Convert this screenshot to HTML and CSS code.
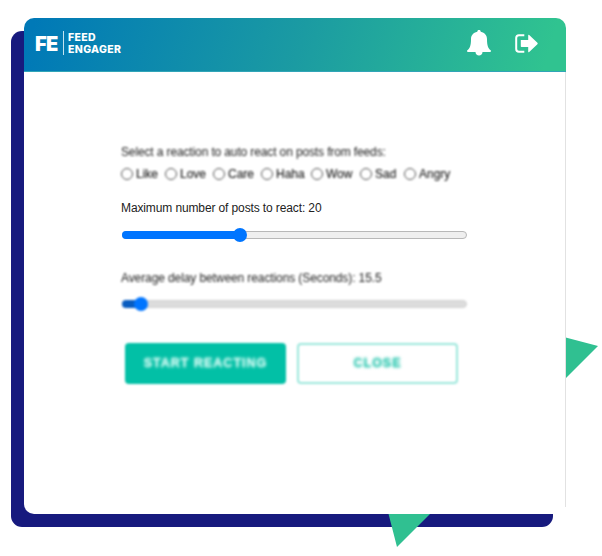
FILE: index.html
```html
<!DOCTYPE html>
<html lang="en">
<head>
<meta charset="utf-8">
<title>Feed Engager</title>
<link rel="stylesheet" href="styles.css">
</head>
<body>
<div class="stage">
  <div class="backdrop"></div>
  <svg class="shapes" width="602" height="556" viewBox="0 0 602 556" aria-hidden="true">
    <path d="M560 336 598 346 560 384zM387 508 436 508 397 547z"/>
  </svg>
  <main class="card">
    <header class="header">
      <div class="logo">
        <span class="mark">FE</span>
        <span class="name"><span>FEED</span><span>ENGAGER</span></span>
      </div>
      <nav class="actions">
        <svg width="24" height="26" viewBox="0 0 24 26" fill="#fff"><path d="M12 0c1.100 0 1.700.6 1.700 1.700C17.900 2.600 20 5.500 20 9c0 6.600 1 9 3.600 11.300.8.800.4 1.700-.7 1.700H1.100c-1.100 0-1.500-.9-.7-1.700C3 18 4 15.600 4 9c0-3.500 2.100-6.400 6.300-7.300C10.300.6 10.900 0 12 0zM8.500 22h7c0 2.200-1.500 3.500-3.500 3.500S8.500 24.200 8.500 22z"/></svg>
        <svg width="23" height="19" viewBox="0 0 23 19"><path d="M9.300 1.200H4Q1.200 1.200 1.200 4v11Q1.200 17.800 4 17.800h5.300" fill="none" stroke="#fff" stroke-width="2"/><path d="M5.800 6h7.400V1.500q0-1.300 1-.4l8.200 7.700q.6.700 0 1.400l-8.200 7.700q-1 .9-1-.4V13H6.500q-.7 0-.7-.7z" fill="#fff"/></svg>
      </nav>
    </header>
    <section class="content">
      <p class="label soft prompt">Select a reaction to auto react on posts from feeds:</p>
      <div class="reactions soft">
        <span class="option like"><i class="radio"></i>Like</span>
        <span class="option love"><i class="radio"></i>Love</span>
        <span class="option care"><i class="radio"></i>Care</span>
        <span class="option haha"><i class="radio"></i>Haha</span>
        <span class="option wow"><i class="radio"></i>Wow</span>
        <span class="option sad"><i class="radio"></i>Sad</span>
        <span class="option"><i class="radio"></i>Angry</span>
      </div>
      <p class="label maximum">Maximum number of posts to react: 20</p>
      <div class="slider"><div class="fill posts"></div><i class="thumb"></i></div>
      <p class="label soft delay">Average delay between reactions (Seconds): 15.5</p>
      <div class="slider muted"><div class="fill seconds"></div><i class="thumb"></i></div>
      <div class="buttons">
        <div class="button primary"><span>START REACTING</span></div>
        <div class="button outline"><span>CLOSE</span></div>
      </div>
    </section>
  </main>
</div>
</body>
</html>
```
FILE: styles.css
```css
* { box-sizing: border-box; }
body { margin: 0; background: #fff; font-family: "Liberation Sans", Arial, sans-serif; }
.stage { position: relative; width: 602px; height: 556px; padding: 18px 36px 42px 24px; overflow: hidden; }
.backdrop { position: absolute; left: 11px; top: 31px; width: 542px; height: 496px; border-radius: 11px; background: #171a7e; }
.shapes { position: absolute; left: 0; top: 0; fill: #30c091; }
.card { position: relative; width: 542px; height: 496px; border-radius: 10px 10px 0 10px; background: linear-gradient(#e2e2e2, #e2e2e2) right 0 top 54px / 1px 435px no-repeat #fff; }
.header { display: flex; justify-content: space-between; align-items: center; height: 54px; padding: 0 28px 3px 11px; border-radius: 10px 10px 0 0; border-bottom: 1px solid #31a5b8; background: linear-gradient(107deg, #0079b7 2%, #1b9ba2 51%, #30c390 96%); }
.logo { display: flex; align-items: center; gap: 4px; color: #fff; }
.mark { width: 24px; font: 900 20px/24px Inter, sans-serif; letter-spacing: -.6px; padding-top: 1px; }
.name { display: flex; flex-direction: column; gap: 1px; height: 24px; padding: 1px 0 0 4px; border-left: 1px solid #c3e3ef; font: 800 10.500px/11px Inter, sans-serif; letter-spacing: .35px; }
.actions { display: flex; align-items: center; gap: 24px; }
.content { display: flex; flex-direction: column; width: 347px; margin: 72px 0 0 97px; }
.label { margin: 0; height: 16px; font-size: 12px; line-height: 16px; color: #222; white-space: nowrap; letter-spacing: -.12px; }
.soft { filter: blur(1.2px); }
.prompt { letter-spacing: -.13px; }
.reactions { display: flex; height: 16px; margin-top: 6px; font-size: 12px; line-height: 16px; color: #222; -webkit-text-stroke: .15px #222; }
.option { display: flex; align-items: center; gap: 3px; white-space: nowrap; }
.like { width: 44px; }
.love { width: 48px; }
.care { width: 48px; }
.haha { width: 50px; }
.wow { width: 49px; }
.sad { width: 44px; }
.radio { flex: none; width: 12px; height: 12px; border: 1px solid #555; border-radius: 50%; }
.maximum { margin-top: 18px; }
.slider { display: flex; align-items: center; width: 345px; height: 8px; margin: 15px 0 0 1px; border: 1px solid #b8b8b8; border-radius: 4px; background: #efefef; }
.fill { flex: none; height: 8px; margin-left: -1px; border-radius: 4px 0 0 4px; background: #0075ff; }
.posts { width: 118px; }
.seconds { width: 19px; background: #075cc0; }
.thumb { flex: none; width: 14px; height: 14px; margin-left: -7px; border-radius: 50%; background: #0075ff; }
.delay { margin-top: 31px; letter-spacing: -.1px; }
.muted { margin-top: 14px; border-color: #d2d2d2; background: #dcdcdc; filter: blur(.8px); }
.buttons { display: flex; gap: 11px; margin: 35px 0 0 4px; }
.button { display: flex; align-items: center; justify-content: center; width: 161px; height: 41px; padding-bottom: 1px; border-radius: 4px; font-size: 12.5px; font-weight: 700; letter-spacing: 1px; filter: blur(.8px); }
.button span { filter: blur(.8px); -webkit-text-stroke: .3px currentColor; }
.primary { background: #02c0a6; color: #e4fff9; }
.outline { border: 2px solid #9be7dc; color: #1cc3aa; }
```
